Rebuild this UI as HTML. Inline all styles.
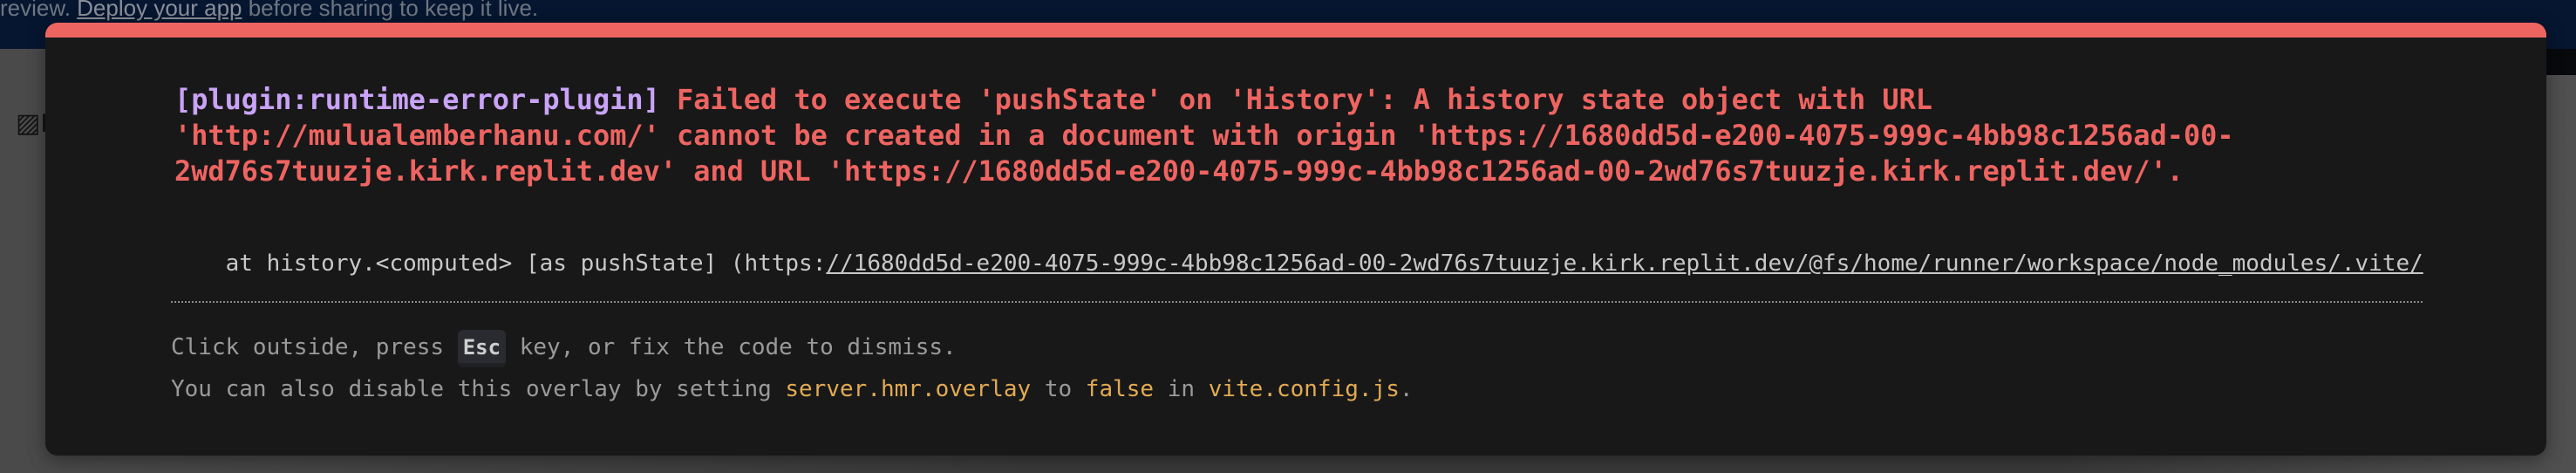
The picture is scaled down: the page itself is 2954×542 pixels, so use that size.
<!DOCTYPE html>
<html><head><meta charset="utf-8"><style>
html,body{margin:0;padding:0;width:2954px;height:542px;overflow:hidden;background:#454545;}
.banner{position:absolute;left:0;top:0;width:2954px;height:56px;background:#061630;}
.banner span{position:absolute;left:0;top:-6px;font:26px "Liberation Sans",sans-serif;color:#6f7682;white-space:nowrap;}
.banner u{color:#8a8f99;}
.dark{position:absolute;left:2920px;top:56px;width:34px;height:30px;background:#07090d;}
.page{position:absolute;left:0;top:56px;width:2954px;height:486px;background:linear-gradient(90deg,#4a4a4a,#3a3a3a 40%,#3a3a3a 80%,#505050);}
.iot{position:absolute;left:18px;top:124px;font:30px "Liberation Sans",sans-serif;color:#111;}
.ov{position:absolute;left:52px;top:26px;width:2868px;height:496px;background:#181818;border-radius:14px;overflow:hidden;box-shadow:0 4px 20px rgba(0,0,0,.4);}
.ov .bar{height:17px;background:#ee6461;}
.msg{position:absolute;left:148px;top:68px;font:bold 31.9px/41px "DejaVu Sans Mono","Liberation Mono",monospace;color:#ee6461;white-space:pre;}
.msg .p{color:#c9a3f7;}
.st{position:absolute;left:144px;top:258px;font:26px/36px "DejaVu Sans Mono","Liberation Mono",monospace;color:#c8c8c8;white-space:pre;}
.st u{text-decoration:underline;}
.hr{position:absolute;left:144px;top:319px;width:2582px;border-top:2px dotted #8a8a8a;}
.ft{position:absolute;left:144px;font:26px/36px "DejaVu Sans Mono","Liberation Mono",monospace;color:#9a9a9a;white-space:pre;}
.ft .y{color:#e2aa53;}
kbd{font:bold 24px "DejaVu Sans Mono",monospace;color:#cfcfcf;background:#2a2b30;border-radius:6px;padding:6px 6px 4px;border-bottom:5px solid #1f2024;}
</style></head><body>
<div class="banner"><span>review. <u>Deploy your app</u> before sharing to keep it live.</span></div>
<div class="page"></div>
<div class="dark"></div>
<div class="iot">▨IoT</div>
<div class="ov"><div class="bar"></div>
<div class="msg"><span class="p">[plugin:runtime-error-plugin]</span> Failed to execute 'pushState' on 'History': A history state object with URL
'http://mulualemberhanu.com/' cannot be created in a document with origin 'https://1680dd5d-e200-4075-999c-4bb98c1256ad-00-
2wd76s7tuuzje.kirk.replit.dev' and URL 'https://1680dd5d-e200-4075-999c-4bb98c1256ad-00-2wd76s7tuuzje.kirk.replit.dev/'.</div>
<div class="st">    at history.&lt;computed&gt; [as pushState] (https:<u>//1680dd5d-e200-4075-999c-4bb98c1256ad-00-2wd76s7tuuzje.kirk.replit.dev/@fs/home/runner/workspace/node_modules/.vite/</u></div>
<div class="hr"></div>
<div class="ft" style="top:354px">Click outside, press <kbd>Esc</kbd> key, or fix the code to dismiss.</div>
<div class="ft" style="top:402px">You can also disable this overlay by setting <span class="y">server.hmr.overlay</span> to <span class="y">false</span> in <span class="y">vite.config.js</span>.</div>
</div>
</body></html>
